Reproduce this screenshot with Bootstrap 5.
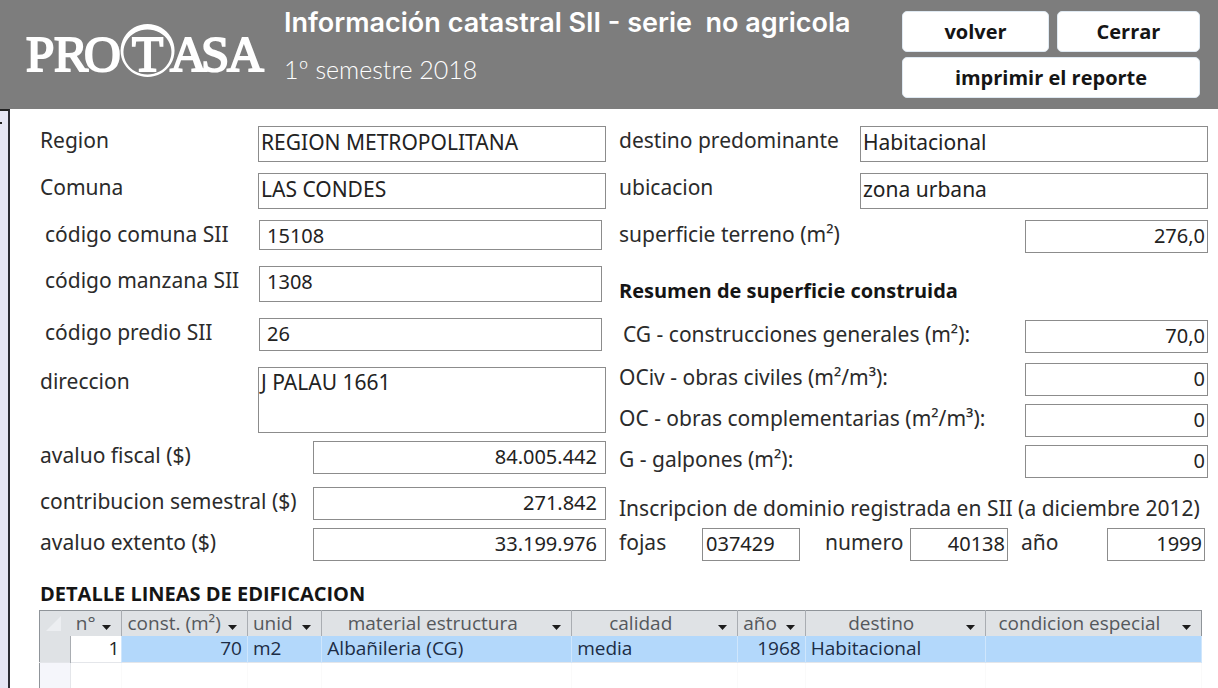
<!DOCTYPE html>
<html lang="es">
<head>
<meta charset="utf-8">
<meta name="viewport" content="width=device-width, initial-scale=1">
<title>Información catastral SII</title>
<link rel="stylesheet" href="https://cdn.jsdelivr.net/npm/bootstrap@5.3.0/dist/css/bootstrap.min.css">
<style>
body { font-family: "Noto Sans", "Open Sans", sans-serif; font-size: 21px; line-height: 28px; color: #2b2b2b; background: #fff; }
.top-bar { background: #7d7d7d; min-height: 109px; padding: 0 18px 0 24px; color: #fff; }
.brand-logo { width: 242px; height: 80px; margin-top: 11px; overflow: visible; }
.titles { margin-left: 18px; }
.titles h1 { font: 600 27px/32px Inter, sans-serif; margin: 7px 0 14px; white-space: pre; }
.titles p { font: 300 25px/32px Lato, sans-serif; margin: 0; }
.actions { display: grid; grid-template-columns: 147px 143px; gap: 5px 8px; margin-top: 11px; }
.actions .btn { height: 41px; padding: 0; background: #fff; border: 1px solid #dfe9f2; border-radius: 5px; font: 700 20px/28px "Open Sans", sans-serif; color: #151515; }
.actions .wide { grid-column: 1 / -1; }
.side-strip { width: 10px; background: #e6e6f4; border-top: 2px solid #222; border-right: 2px solid #2c2c34; }
.side-strip::before { content: ""; display: block; width: 2px; height: 2px; margin-top: 11px; background: #222; }
.content-area { padding: 17px 10px 0 30px; }
.form-cols { gap: 13px; }
.form-left { flex: 566 1 0; }
.form-right { flex: 589 1 0; }
.line { display: flex; align-items: flex-start; justify-content: space-between; }
.line label { white-space: nowrap; }
.line.inset { padding: 0 4px 0 5px; }
.gap-8 { margin-bottom: 8px; }
.gap-10 { margin-bottom: 10px; }
.gap-11 { margin-bottom: 11px; }
.gap-13 { margin-bottom: 13px; }
.gap-16 { margin-bottom: 16px; }
.field { height: 33px; padding: 0 3px 2px; border: 1px solid #8c8c8c; border-radius: 0; background: #fff; color: #222; font-size: 20px; line-height: 28px; resize: none; min-width: 0; }
.field.tall { height: 36px; padding-bottom: 5px; }
.field.low { height: 30px; padding-bottom: 0; }
.field.area { height: 66px; display: block; overflow: hidden; }
.field.num { text-align: right; padding: 0 2px 2px; }
.field.money { padding-right: 8px; width: 293px; }
.field.code { width: 343px; padding-left: 7px; }
.field.w-text { width: 348px; padding-left: 2px; font-size: 21px; }
.w-num { width: 183px; }
.registry { display: grid; grid-template-columns: 83fr 98fr 110fr 98fr 99fr 98fr; padding-right: 3px; margin-top: 6px; }
.registry .mid { padding-left: 25px; }
.registry .end { padding-left: 13px; }
.heading { font: 700 20px/28px "Open Sans", sans-serif; margin: 0; color: #151515; }
.summary { margin: 24px 0 15px; }
.detail-title { margin: 19px 0 2px; }
.detail { table-layout: fixed; width: calc(100% - 5px); margin-left: -1px; border: 1px solid #8f9499; border-bottom: 0; font: 400 20px/25px "Open Sans", sans-serif; }
.detail th { background: #dfe2e5; color: #55585c; font-size: 19px; font-weight: 400; height: 25px; padding: 0 5px; border-right: 1px solid #a9adb2; white-space: nowrap; }
.detail .cap { display: flex; justify-content: space-between; align-items: center; }
.detail .cap span { flex: 1; text-align: center; }
.detail .cap.mid span { padding-right: 12px; }
.detail th:last-child { border-right: 0; }
.detail th:first-child { border-right: 0; padding: 0 6px; }
.detail td { background: #b3d8fb; color: #1c2c44; font-size: 19px; height: 26px; padding: 0 5px; border-right: 1px solid #cfe6fc; white-space: nowrap; }
.detail td.plain { background: #fff; color: #222; padding: 0 2px; }
.detail td.pick { background: #dfe2e5; border-right-color: #a9adb2; }
.detail .rest td { background: #fff; border-right-color: #fafafa; border-top: 1px solid #e4e6ea; }
.detail .rest td.pick { background: #f5f6fb; border-right-color: #e4e6ea; }
.arrow { width: 9px; height: 5px; margin: 8px 5px 0 2px; flex: none; }
.corner { display: block; width: 15px; height: 15px; }
</style>
</head>
<body class="d-flex flex-column min-vh-100">
<svg width="0" height="0" class="position-absolute" aria-hidden="true"><symbol id="arr" viewBox="0 0 9 5"><path d="M0 0h9L4.500 5z" fill="#1c1c1c"/></symbol></svg>
<header class="top-bar d-flex align-items-start">
  <svg class="brand-logo flex-shrink-0" viewBox="0 0 242 80" role="img" aria-label="PROTASA">
    <g fill="#fff" stroke="#fff" stroke-width="2" font-family="Liberation Serif, serif" font-size="51">
      <text x="2 30 60" y="60">PRO</text>
      <text x="108" y="60">T</text>
      <text x="146 177 203" y="60">ASA</text>
    </g>
    <path fill="#fff" fill-rule="evenodd" d="M123.500 13a27 26.500 0 1 0 .1 0zM123.500 18.500a24 22.500 0 1 1-.1 0z"/>
  </svg>
  <div class="titles flex-grow-1">
    <h1>Información catastral SII - serie  no agricola</h1>
    <p>1º semestre 2018</p>
  </div>
  <div class="actions">
    <button type="button" class="btn">volver</button>
    <button type="button" class="btn">Cerrar</button>
    <button type="button" class="btn wide">imprimir el reporte</button>
  </div>
</header>

<div class="d-flex flex-grow-1">
  <div class="side-strip flex-shrink-0"></div>
  <main class="content-area flex-grow-1">
    <form class="d-flex form-cols">
      <div class="form-left">
        <div class="line gap-11"><label for="region">Region</label><input id="region" class="field tall w-text" value="REGION METROPOLITANA"></div>
        <div class="line gap-11"><label for="comuna">Comuna</label><input id="comuna" class="field tall w-text" value="LAS CONDES"></div>
        <div class="line inset gap-16"><label for="ccom">código comuna SII</label><input id="ccom" class="field low code" value="15108"></div>
        <div class="line inset gap-16"><label for="cman">código manzana SII</label><input id="cman" class="field tall code" value="1308"></div>
        <div class="line inset gap-16"><label for="cpre">código predio SII</label><input id="cpre" class="field code" value="26"></div>
        <div class="line gap-8"><label for="dir">direccion</label><textarea id="dir" class="field area w-text">J PALAU 1661</textarea></div>
        <div class="line gap-13"><label for="afis">avaluo fiscal ($)</label><input id="afis" class="field num money" value="84.005.442"></div>
        <div class="line gap-8"><label for="csem">contribucion semestral ($)</label><input id="csem" class="field num money" value="271.842"></div>
        <div class="line"><label for="aext">avaluo extento ($)</label><input id="aext" class="field num money" value="33.199.976"></div>
      </div>
      <div class="form-right">
        <div class="line gap-11"><label for="dest">destino predominante</label><input id="dest" class="field tall w-text" value="Habitacional"></div>
        <div class="line gap-11"><label for="ubic">ubicacion</label><input id="ubic" class="field tall w-text" value="zona urbana"></div>
        <div class="line"><label for="supt">superficie terreno (m²)</label><input id="supt" class="field num w-num" value="276,0"></div>
        <h2 class="heading summary">Resumen de superficie construida</h2>
        <div class="line gap-10"><label for="cg" class="ps-1">CG - construcciones generales (m²):</label><input id="cg" class="field num w-num" value="70,0"></div>
        <div class="line gap-8"><label for="ociv">OCiv - obras civiles (m²/m³):</label><input id="ociv" class="field num w-num" value="0"></div>
        <div class="line gap-8"><label for="oc">OC - obras complementarias (m²/m³):</label><input id="oc" class="field num w-num" value="0"></div>
        <div class="line gap-16"><label for="gal">G - galpones (m²):</label><input id="gal" class="field num w-num" value="0"></div>
        <p class="m-0 text-nowrap">Inscripcion de dominio registrada en SII (a diciembre 2012)</p>
        <div class="registry">
          <label for="foj">fojas</label><input id="foj" class="field" value="037429">
          <label for="nume" class="mid">numero</label><input id="nume" class="field num" value="40138">
          <label for="anio" class="end">año</label><input id="anio" class="field num" value="1999">
        </div>
      </div>
    </form>
    <h2 class="heading detail-title">DETALLE LINEAS DE EDIFICACION</h2>
    <table class="detail">
      <colgroup><col style="width:2.7%"><col style="width:4.4%"><col style="width:10.8%"><col style="width:6.4%"><col style="width:21.5%"><col style="width:14.3%"><col style="width:5.8%"><col style="width:15.5%"><col></colgroup>
      <thead><tr>
        <th><svg class="corner" viewBox="0 0 15 15" aria-hidden="true"><path d="M15 0v15H0z" fill="#eceef1"/></svg></th>
        <th><div class="cap"><span class="text-start">n°</span><svg class="arrow"><use href="#arr"/></svg></div></th>
        <th><div class="cap"><span class="text-start">const. (m²)</span><svg class="arrow"><use href="#arr"/></svg></div></th>
        <th><div class="cap"><span class="text-start">unid</span><svg class="arrow"><use href="#arr"/></svg></div></th>
        <th><div class="cap mid"><span>material estructura</span><svg class="arrow"><use href="#arr"/></svg></div></th>
        <th><div class="cap mid"><span>calidad</span><svg class="arrow"><use href="#arr"/></svg></div></th>
        <th><div class="cap"><span class="text-start">año</span><svg class="arrow"><use href="#arr"/></svg></div></th>
        <th><div class="cap mid"><span>destino</span><svg class="arrow"><use href="#arr"/></svg></div></th>
        <th><div class="cap mid"><span>condicion especial</span><svg class="arrow"><use href="#arr"/></svg></div></th>
      </tr></thead>
      <tbody>
        <tr><td class="pick"></td><td class="plain text-end">1</td><td class="text-end">70</td><td>m2</td><td>Albañileria (CG)</td><td>media</td><td class="text-end px-1">1968</td><td>Habitacional</td><td></td></tr>
        <tr class="rest"><td class="pick"></td><td></td><td></td><td></td><td></td><td></td><td></td><td></td><td></td></tr>
      </tbody>
    </table>
  </main>
</div>
<script src="https://cdn.jsdelivr.net/npm/bootstrap@5.3.0/dist/js/bootstrap.bundle.min.js"></script>
</body>
</html>
